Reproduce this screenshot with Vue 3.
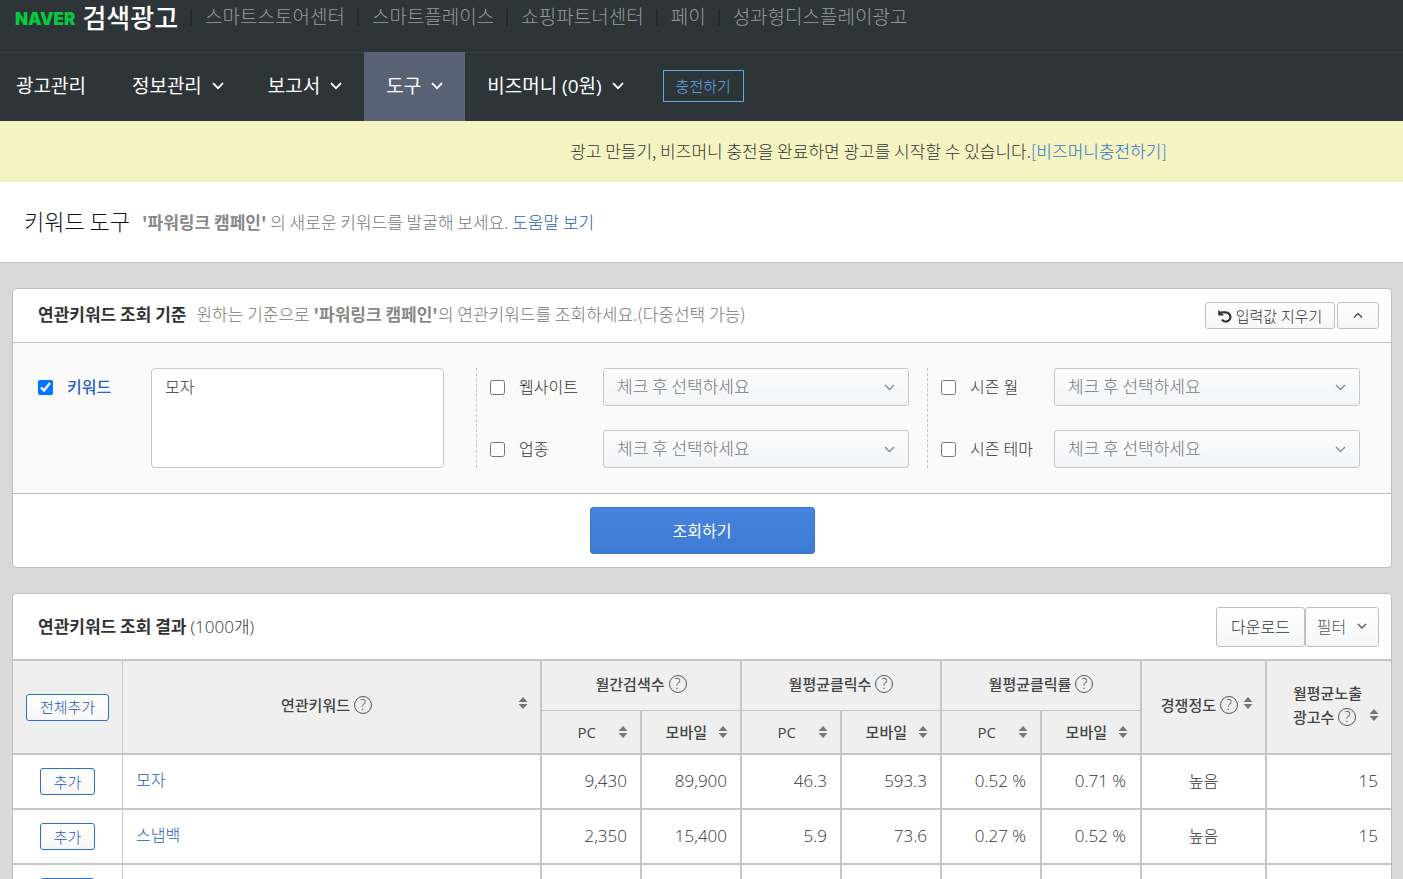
<script setup>
import { ref } from 'vue'

const services = ['스마트스토어센터', '스마트플레이스', '쇼핑파트너센터', '페이', '성과형디스플레이광고']

const menus = [
  { label: '광고관리', drop: false, active: false },
  { label: '정보관리', drop: true, active: false },
  { label: '보고서', drop: true, active: false },
  { label: '도구', drop: true, active: true },
  { label: '비즈머니 (0원)', drop: true, active: false },
]

const filterGroups = [
  [
    { id: 'website', label: '웹사이트' },
    { id: 'industry', label: '업종' },
  ],
  [
    { id: 'month', label: '시즌 월' },
    { id: 'theme', label: '시즌 테마' },
  ],
]

const metrics = ['월간검색수', '월평균클릭수', '월평균클릭률']

const rows = [
  { keyword: '모자', values: ['9,430', '89,900', '46.3', '593.3', '0.52 %', '0.71 %'], level: '높음', ads: '15' },
  { keyword: '스냅백', values: ['2,350', '15,400', '5.9', '73.6', '0.27 %', '0.52 %'], level: '높음', ads: '15' },
  { keyword: '', values: ['', '', '', '', '', ''], level: '', ads: '' },
]

const keywordOn = ref(true)
const keywords = ref('모자')
</script>

<template>
  <div class="page">
    <header class="top">
      <div class="services">
        <a href="#" class="logo"><span class="naver">NAVER</span><span class="product">검색광고</span></a>
        <a v-for="s in services" :key="s" href="#" class="service">{{ s }}</a>
      </div>
      <nav class="menu">
        <a v-for="m in menus" :key="m.label" href="#" class="menu-item" :class="{ active: m.active }">
          {{ m.label }}
          <svg v-if="m.drop" width="12" height="8" viewBox="0 0 12 8"><path d="M1 1.2 6 6.2 11 1.2" fill="none" stroke="currentColor" stroke-width="1.8" /></svg>
        </a>
        <button type="button" class="charge">충전하기</button>
      </nav>
    </header>

    <p class="notice">광고 만들기, 비즈머니 충전을 완료하면 광고를 시작할 수 있습니다.<a href="#">[비즈머니충전하기]</a></p>

    <div class="title-bar">
      <h1>키워드 도구</h1>
      <p><b>'파워링크 캠페인'</b> 의 새로운 키워드를 발굴해 보세요. <a href="#">도움말 보기</a></p>
    </div>

    <main>
      <section class="panel">
        <div class="panel-head criteria-head">
          <h2>연관키워드 조회 기준</h2>
          <p class="hint">원하는 기준으로 <b>'파워링크 캠페인'</b>의 연관키워드를 조회하세요.(다중선택 가능)</p>
          <div class="tools small-tools">
            <button type="button" class="btn reset">
              <svg width="14" height="14" viewBox="0 0 14 14"><path d="M2.500 3.400H7.800A4.600 4.600 0 1 1 3.900 10.500" fill="none" stroke="currentColor" stroke-width="2.200" /><path d="M.2 .8V6.600H6Z" fill="currentColor" /></svg>
              입력값 지우기
            </button>
            <button type="button" class="btn fold" aria-label="접기">
              <svg width="10" height="7" viewBox="0 0 10 7"><path d="M1 5.500 5 1.500 9 5.500" fill="none" stroke="currentColor" stroke-width="1.1" /></svg>
            </button>
          </div>
        </div>

        <div class="criteria">
          <div class="keyword-field">
            <input id="use-keyword" v-model="keywordOn" type="checkbox">
            <label for="use-keyword">키워드</label>
            <textarea v-model="keywords" aria-label="키워드"></textarea>
          </div>
          <div v-for="(group, i) in filterGroups" :key="i" class="group">
            <div v-for="f in group" :key="f.id" class="filter">
              <input :id="'use-' + f.id" type="checkbox">
              <label :for="'use-' + f.id">{{ f.label }}</label>
              <span class="select">
                <select :aria-label="f.label"><option>체크 후 선택하세요</option></select>
                <svg width="11" height="7" viewBox="0 0 11 7"><path d="M1 1 5.500 5.500 10 1" fill="none" stroke="currentColor" stroke-width="1.3" /></svg>
              </span>
            </div>
          </div>
        </div>

        <div class="submit">
          <button type="button">조회하기</button>
        </div>
      </section>

      <section class="panel">
        <div class="panel-head result-head">
          <h2>연관키워드 조회 결과</h2>
          <span class="count">(1000개)</span>
          <div class="tools">
            <button type="button" class="btn big">다운로드</button>
            <button type="button" class="btn big filter-btn">
              필터
              <svg width="10" height="7" viewBox="0 0 10 7"><path d="M1 1 5 5 9 1" fill="none" stroke="currentColor" stroke-width="1.3" /></svg>
            </button>
          </div>
        </div>

        <table>
          <colgroup>
            <col class="c-add"><col><col v-for="n in 6" :key="n" class="c-num"><col class="c-level"><col class="c-ads">
          </colgroup>
          <thead>
            <tr class="head-a">
              <th rowspan="2" class="add"><button type="button" class="add-btn all">전체추가</button></th>
              <th rowspan="2">
                <div class="th-row keyword">
                  <span class="name">연관키워드<i class="help">?</i></span>
                  <button type="button" class="sort" aria-label="정렬"><svg width="10" height="12" viewBox="0 0 10 12"><path d="M5 0 9.500 5H.5ZM5 12 .5 7h9Z" fill="#777" /></svg></button>
                </div>
              </th>
              <th v-for="m in metrics" :key="m" colspan="2" class="metric"><span class="name">{{ m }}<i class="help">?</i></span></th>
              <th rowspan="2">
                <div class="th-row level">
                  <span class="name">경쟁정도<i class="help">?</i></span>
                  <button type="button" class="sort" aria-label="정렬"><svg width="10" height="12" viewBox="0 0 10 12"><path d="M5 0 9.500 5H.5ZM5 12 .5 7h9Z" fill="#777" /></svg></button>
                </div>
              </th>
              <th rowspan="2">
                <div class="th-row ads">
                  <span class="two-line"><span>월평균노출</span><span class="name">광고수<i class="help">?</i></span></span>
                  <button type="button" class="sort" aria-label="정렬"><svg width="10" height="12" viewBox="0 0 10 12"><path d="M5 0 9.500 5H.5ZM5 12 .5 7h9Z" fill="#777" /></svg></button>
                </div>
              </th>
            </tr>
            <tr class="head-b">
              <th v-for="n in 6" :key="n">
                <div class="th-row device">
                  <span class="name">{{ n % 2 ? 'PC' : '모바일' }}</span>
                  <button type="button" class="sort" aria-label="정렬"><svg width="10" height="12" viewBox="0 0 10 12"><path d="M5 0 9.500 5H.5ZM5 12 .5 7h9Z" fill="#777" /></svg></button>
                </div>
              </th>
            </tr>
          </thead>
          <tbody>
            <tr v-for="(r, i) in rows" :key="i">
              <td class="add"><button type="button" class="add-btn">추가</button></td>
              <td class="kw"><a href="#">{{ r.keyword }}</a></td>
              <td v-for="(v, j) in r.values" :key="j" class="num" :class="{ rate: j > 3 }">{{ v }}</td>
              <td class="mid">{{ r.level }}</td>
              <td class="num">{{ r.ads }}</td>
            </tr>
          </tbody>
        </table>
      </section>
    </main>
  </div>
</template>

<style>
body {
  margin: 0;
  background: #d9d9d9;
}
</style>

<style scoped>
* {
  box-sizing: border-box;
}
.page {
  height: 100vh;
  overflow: hidden;
  background: #d9d9d9;
  color: #333;
  font-family: "Open Sans", "Noto Sans CJK KR", sans-serif;
  font-size: 16px;
  font-weight: 300;
  line-height: 24px;
}
h1, h2, p {
  margin: 0;
}
h1, h2, p, select {
  font-family: "Noto Sans CJK KR", sans-serif;
}
a {
  color: #1f5cb8;
  text-decoration: none;
}
button, textarea {
  font: inherit;
  color: inherit;
}
input[type="checkbox"] {
  width: 15px;
  height: 15px;
  margin: 0;
  flex: none;
}

/* top */
.top {
  background: #2e3539;
}
.services {
  display: flex;
  height: 52px;
  padding: 0 15px 18px;
  align-items: center;
}
.logo {
  display: flex;
  align-items: center;
  gap: 7px;
  padding-right: 12px;
}
.naver {
  color: #06c93f;
  font-family: Inter, sans-serif;
  font-size: 17px;
  font-weight: 900;
  padding-top: 4px;
}
.product {
  padding-top: 2px;
  color: #fff;
  font-size: 26px;
  font-weight: 500;
  line-height: 34px;
}
.service {
  display: flex;
  height: 17px;
  align-items: center;
  border-left: 2px solid #22282b;
  padding: 0 12px 0 13px;
  color: #959a9e;
  font-size: 19px;
  white-space: nowrap;
}
.menu {
  display: flex;
  height: 69px;
  align-items: center;
  box-shadow: inset 0 1px #383f44;
}
.menu-item {
  display: flex;
  align-items: center;
  gap: 10px;
  height: 100%;
  padding: 0 22px 2px;
  color: #fff;
  font-size: 19px;
  font-weight: 400;
  white-space: nowrap;
}
.menu-item:first-child {
  padding: 0 24px 2px 16px;
}
.menu-item.active {
  background: #596274;
}
.charge {
  width: 81px;
  height: 32px;
  margin-left: 17px;
  margin-bottom: 2px;
  padding: 0;
  border: 1px solid #6aa5e2;
  background: none;
  color: #68aaf0;
  font-size: 15px;
}

/* notice and title */
.notice {
  padding: 18px 0 19px 334px;
  background: #f5f3c1;
  font-size: 17px;
  text-align: center;
}
.notice a {
  color: #2e76c8;
}
.title-bar {
  display: flex;
  height: 81px;
  align-items: center;
  gap: 12px;
  padding-left: 24px;
  background: #fff;
  border-bottom: 1px solid #bebebe;
  color: #777;
  font-size: 17px;
}
h1 {
  padding-bottom: 4px;
  color: #111;
  font-size: 22px;
  font-weight: 300;
}
b {
  font-weight: 700;
}
.title-bar b, .hint b {
  color: #888;
}

/* panels */
main {
  padding: 25px 11px 0 12px;
}
.panel {
  margin-bottom: 25px;
  border: 1px solid #bfbfbf;
  border-radius: 4px;
  background: #fff;
  overflow: hidden;
}
.panel-head {
  display: flex;
  align-items: center;
  padding: 0 12px 0 25px;
}
.criteria-head {
  height: 54px;
  border-bottom: 1px solid #bfbfbf;
}
.criteria-head h2, .hint {
  padding-bottom: 4px;
}
.result-head {
  height: 65px;
}
h2 {
  padding-bottom: 2px;
  color: #333;
  font-size: 17px;
  font-weight: 700;
}
.hint {
  margin-left: 10px;
  color: #777;
  font-size: 17px;
}
.count {
  margin-left: 4px;
  font-size: 17px;
}
.tools {
  display: flex;
  margin-left: auto;
}
.small-tools {
  gap: 2px;
}
.btn {
  display: flex;
  align-items: center;
  justify-content: center;
  height: 27px;
  padding: 0;
  border: 1px solid #bfbfbf;
  border-radius: 3px;
  background: linear-gradient(#fff, #f5f6f7);
  color: #333;
}
.reset {
  width: 130px;
  gap: 4px;
  font-size: 15px;
}
.fold {
  width: 42px;
}
.big {
  width: 89px;
  height: 40px;
}
.filter-btn {
  width: 74px;
  gap: 11px;
  color: #555;
}
.criteria {
  display: flex;
  padding: 25px 31px 25px 25px;
  background: #fafafa;
  border-bottom: 1px solid #bfbfbf;
}
.keyword-field {
  display: flex;
  flex: 1;
}
.keyword-field input {
  margin-top: 12px;
}
.keyword-field label {
  width: 84px;
  margin-left: 14px;
  padding-top: 7px;
  color: #2b62c4;
  font-weight: 500;
}
textarea {
  flex: 1;
  min-width: 0;
  height: 100px;
  margin-right: 32px;
  padding: 6px 13px;
  border: 1px solid #c8c8c8;
  border-radius: 4px;
  background: #fff;
  resize: none;
}
.group {
  display: flex;
  flex: none;
  flex-direction: column;
  justify-content: space-between;
  width: 451px;
  padding-left: 13px;
  padding-right: 18px;
  border-left: 1px dashed #c4c4c4;
}
.group:last-child {
  width: 433px;
  padding-right: 0;
}
.filter {
  display: flex;
  align-items: center;
}
.filter label {
  width: 84px;
  margin-left: 14px;
}
.select {
  position: relative;
  flex: 1;
  color: #888;
}
.select select {
  display: block;
  width: 100%;
  height: 38px;
  padding: 0 13px 3px;
  border: 1px solid #c8c8c8;
  border-radius: 3px;
  appearance: none;
  background: linear-gradient(#fdfdfd, #f2f4f6);
  color: #777;
  font-size: 17px;
  font-weight: 300;
}
.select svg {
  position: absolute;
  right: 14px;
  top: 16px;
  pointer-events: none;
}
.submit {
  display: flex;
  justify-content: center;
  padding: 13px 0;
}
.submit button {
  width: 225px;
  height: 47px;
  border: 1px solid #3b78d0;
  border-radius: 3px;
  background: linear-gradient(#4584de, #3f7ad2);
  color: #fff;
  font-weight: 400;
}

/* table */
table {
  width: 100%;
  table-layout: fixed;
  border-collapse: separate;
  border-spacing: 0;
  border-top: 2px solid #c6c6c6;
}
.c-add {
  width: 110px;
}
.c-num {
  width: 100px;
}
.c-level {
  width: 125px;
}
.c-ads {
  width: 124px;
}
th, td {
  padding: 0;
  border-right: 2px solid #c6c6c6;
  border-bottom: 2px solid #c6c6c6;
}
th:last-child, td:last-child {
  border-right: 0;
}
.head-b th:last-child {
  border-right: 2px solid #c6c6c6;
}
.add {
  border-right-width: 1px;
  text-align: center;
}
th {
  background: #efefef;
  color: #444;
  font-size: 15px;
  font-weight: 500;
}
.head-a {
  height: 50px;
}
.head-a .metric {
  padding-bottom: 4px;
  border-bottom-width: 1px;
}
.head-b {
  height: 44px;
}
.name {
  display: inline-flex;
  align-items: center;
  gap: 4px;
}
.help {
  width: 18px;
  height: 18px;
  border: 1px solid #555;
  border-radius: 50%;
  font-size: 14px;
  font-style: normal;
  font-weight: 300;
  line-height: 16px;
  text-align: center;
}
.sort {
  display: flex;
  padding: 0;
  border: 0;
  background: none;
}
.th-row {
  display: flex;
  align-items: center;
  justify-content: flex-end;
  padding-right: 12px;
}
.keyword, .level {
  padding-bottom: 4px;
}
.keyword .sort, .level .sort {
  margin-bottom: 4px;
}
.keyword {
  padding-left: 12px;
}
.keyword .name {
  margin: 0 auto;
}
.level {
  gap: 5px;
}
.ads {
  gap: 7px;
  padding-bottom: 4px;
}
.ads .sort {
  margin-top: 20px;
}
.two-line {
  display: flex;
  flex-direction: column;
  align-items: flex-start;
}
.device {
  gap: 11px;
}
.head-b th:nth-child(odd) .device {
  gap: 22px;
}
tbody tr {
  height: 55px;
}
.add-btn {
  width: 55px;
  height: 27px;
  padding: 0;
  border: 1px solid #2e6fc9;
  border-radius: 3px;
  background: linear-gradient(#fff, #f7f7f7);
  color: #1f55c0;
  font-size: 15px;
  font-weight: 300;
  line-height: 24px;
}
.all {
  width: 83px;
}
.kw {
  padding-left: 13px;
  padding-bottom: 3px;
}
.num {
  padding-right: 13px;
  padding-bottom: 2px;
  font-size: 17px;
  text-align: right;
}
.rate {
  padding-right: 14px;
}
.mid {
  padding-bottom: 2px;
  text-align: center;
}
</style>
